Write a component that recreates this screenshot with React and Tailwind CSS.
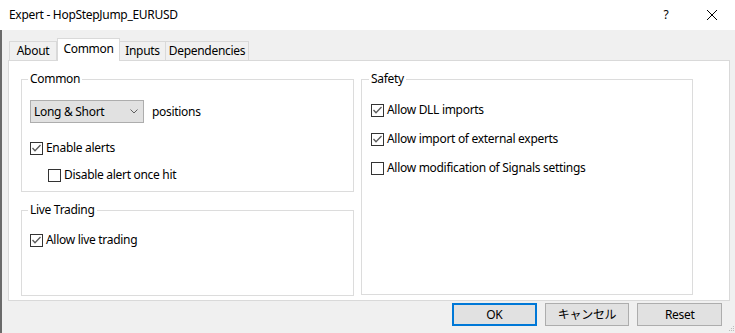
import React from "react";

const font = { fontFamily: '"Noto Sans", "Noto Sans CJK JP", sans-serif' };

function Check({ checked }) {
  return (
    <span className="w-[13px] h-[13px] border border-[#333333] bg-white flex items-center justify-center shrink-0">
      {checked && (
        <svg width="11" height="11" viewBox="0 0 11 11">
          <path d="M1.5 5 L4 7.8 L9.5 2" stroke="#5a5a5a" strokeWidth="1.3" fill="none" />
        </svg>
      )}
    </span>
  );
}

function Row({ checked, label, className = "" }) {
  return (
    <div className={"h-[16px] flex items-center gap-[3px] " + className}>
      <Check checked={checked} />
      <span className="leading-[16px]">{label}</span>
    </div>
  );
}

function Group({ title, className = "", legendClass = "-ml-[2px]", children }) {
  return (
    <fieldset className={"border border-[#dcdcdc] " + className}>
      <legend className={"px-[2px] leading-[16px] " + legendClass}>{title}</legend>
      {children}
    </fieldset>
  );
}

export default function App() {
  return (
    <div className="w-[735px] h-[333px] overflow-hidden flex flex-col bg-[#f0f0f0] text-[12px] tracking-[-0.3px] text-black" style={font}>
      <div className="h-[30px] bg-white flex items-center shrink-0">
        <span className="pl-[9px] flex-1">Expert - HopStepJump_EURUSD</span>
        <span className="w-[20px] text-center mr-[30px]">?</span>
        <svg width="12" height="12" viewBox="0 0 12 12" className="mr-[17px]">
          <path d="M1 1 L11 11 M11 1 L1 11" stroke="#000" strokeWidth="1" />
        </svg>
      </div>
      <div className="flex-1 flex flex-col border-l-2 border-[#6a6a6a] pl-[6px] pt-[8px]">
        <div className="flex h-[22px] items-end pl-[1px]">
          <div className="h-[19px] border border-b-0 border-[#d9d9d9] flex items-center w-[48px] justify-center">About</div>
          <div className="h-[23px] -mb-[1px] relative z-10 bg-white border border-b-0 border-[#d9d9d9] w-[63px] flex items-start pt-[1px] justify-center">Common</div>
          <div className="h-[19px] border border-b-0 border-l-0 border-[#d9d9d9] flex items-center w-[46px] justify-center">Inputs</div>
          <div className="h-[19px] border border-b-0 border-l-0 border-[#d9d9d9] flex items-center w-[83px] justify-center">Dependencies</div>
        </div>
        <div className="w-[722px] h-[241px] bg-white border border-[#d9d9d9] pt-[10px] pl-[12px] flex gap-[7px]">
          <div className="w-[333px] flex flex-col gap-[10px]">
            <Group title="Common" className="h-[121px] pl-[8px]">
              <div className="flex items-center mt-[13px]">
                <div className="w-[114px] h-[23px] bg-[#e1e1e1] border border-[#adadad] flex items-center pl-[3px] pr-[5px]">
                  <span className="flex-1 leading-[16px]">Long &amp; Short</span>
                  <svg width="8" height="5" viewBox="0 0 8 5">
                    <path d="M0.5 0.5 L4 4 L7.5 0.5" stroke="#606060" strokeWidth="1" fill="none" />
                  </svg>
                </div>
                <span className="ml-[8px]">positions</span>
              </div>
              <Row checked label="Enable alerts" className="mt-[17px]" />
              <Row label="Disable alert once hit" className="mt-[11px] ml-[18px]" />
            </Group>
            <Group title="Live Trading" className="h-[94px] pl-[8px]">
              <Row checked label="Allow live trading" className="mt-[14px]" />
            </Group>
          </div>
          <Group title="Safety" className="w-[332px] h-[224px] pl-[9px]" legendClass="-ml-[2px]">
            <Row checked label="Allow DLL imports" className="mt-[15px]" />
            <Row checked label="Allow import of external experts" className="mt-[13px]" />
            <Row label="Allow modification of Signals settings" className="mt-[13px]" />
          </Group>
        </div>
        <div className="flex mt-[2px] pl-[444px] gap-[8px]">
          <div className="w-[86px] h-[23px] bg-[#e1e1e1] border-2 border-[#0078d7] flex items-center justify-center">OK</div>
          <div className="w-[86px] h-[23px] bg-[#e1e1e1] border border-[#adadad] flex items-center justify-center">キャンセル</div>
          <div className="w-[86px] h-[23px] bg-[#e1e1e1] border border-[#adadad] flex items-center justify-center">Reset</div>
          <svg width="7" height="7" viewBox="0 0 7 7" className="self-end -mb-[6px] ml-[-2px]">
            <rect x="5" y="1" width="1" height="1" fill="#b8b8b8" />
            <rect x="3" y="3" width="1" height="1" fill="#b8b8b8" />
            <rect x="5" y="3" width="1" height="1" fill="#b8b8b8" />
            <rect x="1" y="5" width="1" height="1" fill="#b8b8b8" />
            <rect x="3" y="5" width="1" height="1" fill="#b8b8b8" />
            <rect x="5" y="5" width="1" height="1" fill="#b8b8b8" />
          </svg>
        </div>
      </div>
    </div>
  );
}
